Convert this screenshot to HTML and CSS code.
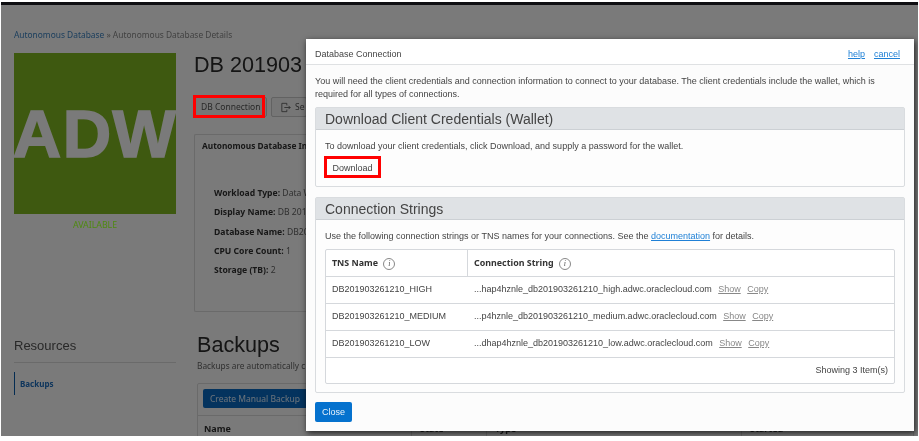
FILE: index.html
```html
<!DOCTYPE html>
<html lang="en">
<head>
<meta charset="utf-8">
<title>Database Connection</title>
<link rel="stylesheet" href="styles.css">
</head>
<body>
<div class="screen">
  <div class="topbar"></div>
  <main class="page">
    <nav class="crumbs"><a href="#">Autonomous Database</a> » Autonomous Database Details</nav>
    <div class="detail">
      <aside class="side">
        <div class="tile"><span class="tile-text">ADW</span></div>
        <div class="status">AVAILABLE</div>
      </aside>
      <section class="summary">
        <h1 class="title">DB 201903</h1>
        <div class="actions">
          <button class="btn btn-db">DB Connection<span class="mark mark-db"></span></button>
          <button class="btn btn-icon">
            <svg class="scale-icon" viewBox="0 0 12 12" width="10" height="11"><path d="M7 3.5V1H1v10h6V8.5M4 6h7M9 4l2 2-2 2" fill="none" stroke="currentColor"/></svg>
            <span>Se</span>
          </button>
        </div>
        <div class="info">
          <h2 class="info-title">Autonomous Database In</h2>
          <dl class="facts">
            <div><dt>Workload Type:</dt> <dd>Data W</dd></div>
            <div><dt>Display Name:</dt> <dd>DB 201</dd></div>
            <div><dt>Database Name:</dt> <dd>DB20</dd></div>
            <div><dt>CPU Core Count:</dt> <dd>1</dd></div>
            <div><dt>Storage (TB):</dt> <dd>2</dd></div>
          </dl>
        </div>
      </section>
      <aside class="resources">
        <h3 class="res-title">Resources</h3>
        <a class="res-link" href="#">Backups</a>
      </aside>
      <section class="backups">
        <h2 class="backups-title">Backups</h2>
        <p class="backups-note">Backups are automatically c</p>
        <div class="backups-table">
          <div class="backups-bar"><button class="btn-primary">Create Manual Backup</button></div>
          <div class="backups-head"><span>Name</span><span>State</span><span>Type</span><span>Started</span></div>
        </div>
      </section>
    </div>
  </main>

  <div class="overlay"></div>

  <div class="modal">
    <header class="modal-head">
      <span>Database Connection</span>
      <span class="modal-links"><a href="#">help</a><a href="#">cancel</a></span>
    </header>
    <div class="modal-body">
      <p class="intro">You will need the client credentials and connection information to connect to your database. The client credentials include the wallet, which is required for all types of connections.</p>
      <section class="panel panel-wallet">
        <h2 class="panel-head">Download Client Credentials (Wallet)</h2>
        <div class="panel-body">
          <p class="panel-text">To download your client credentials, click Download, and supply a password for the wallet.</p>
          <button class="btn-plain">Download<span class="mark mark-dl"></span></button>
        </div>
      </section>
      <section class="panel">
        <h2 class="panel-head">Connection Strings</h2>
        <div class="panel-body">
          <p class="panel-text">Use the following connection strings or TNS names for your connections. See the <a href="#">documentation</a> for details.</p>
          <div class="conn">
            <div class="row row-head">
              <div class="cell cell-name">TNS Name <span class="info-i">i</span></div>
              <div class="cell cell-str">Connection String <span class="info-i">i</span></div>
            </div>
            <div class="row">
              <div class="cell cell-name">DB201903261210_HIGH</div>
              <div class="cell cell-str">...hap4hznle_db201903261210_high.adwc.oraclecloud.com <a href="#">Show</a> <a href="#">Copy</a></div>
            </div>
            <div class="row">
              <div class="cell cell-name">DB201903261210_MEDIUM</div>
              <div class="cell cell-str">...p4hznle_db201903261210_medium.adwc.oraclecloud.com <a href="#">Show</a> <a href="#">Copy</a></div>
            </div>
            <div class="row">
              <div class="cell cell-name">DB201903261210_LOW</div>
              <div class="cell cell-str">...dhap4hznle_db201903261210_low.adwc.oraclecloud.com <a href="#">Show</a> <a href="#">Copy</a></div>
            </div>
            <div class="conn-foot">Showing 3 Item(s)</div>
          </div>
        </div>
      </section>
      <button class="btn-close">Close</button>
    </div>
  </div>
</div>
</body>
</html>
```

FILE: styles.css
```css
* { box-sizing: border-box; }
html, body { margin: 0; padding: 0; background: #fff; }
body { font-family: "Liberation Sans", Arial, sans-serif; overflow: hidden; }
p, h1, h2, h3, dl, dd { margin: 0; }
a { text-decoration: none; }

.screen {
  position: relative;
  width: 917px;
  height: 434px;
  margin: 2px 0 0 1px;
  overflow: hidden;
  background: #fff;
  filter: blur(.3px);
}
.topbar { height: 3px; background: #1f1f24; }

.page { padding: 0 0 0 13px; color: #333; }
.crumbs { padding-top: 23px; height: 48px; font: 8.4px/14px "Noto Sans", sans-serif; color: #8a8a8a; }
.crumbs a { color: #3e85c4; }

.detail { display: grid; grid-template-columns: 162px 720px; column-gap: 18px; }
.tile {
  width: 162px; height: 161px; background: #82bb22;
  display: flex; align-items: center; justify-content: center; overflow: hidden;
}
.tile-text {
  flex: none; font: 700 67px/1 "Liberation Sans", sans-serif; color: #fff;
  -webkit-text-stroke: 1.6px #fff; letter-spacing: 1.5px; padding-bottom: 1px;
}
.status { position: relative; z-index: 2; margin-top: 5px; text-align: center; font: 8.8px/12px "Noto Sans", sans-serif; color: #4f8a10; }

.summary { width: 113px; }
.title { white-space: nowrap; font: 400 21.6px/24px "Liberation Sans", sans-serif; color: #2c2c2c; }
.actions { display: flex; gap: 4px; margin-top: 20px; }
.btn {
  position: relative; flex: none; height: 20px; padding: 0 6px; border: 1px solid #ccc; border-radius: 2px; background: #f7f7f7;
  font: 8.5px/18px "Noto Sans", sans-serif; color: #555; white-space: nowrap; text-align: left;
}
.btn-db { width: 73px; }
.btn-icon { display: flex; align-items: center; gap: 4px; width: 36px; padding: 0 0 0 9px; }
.scale-icon { flex: none; }
.mark { position: absolute; z-index: 2; border: 3px solid #f00; pointer-events: none; }
.mark-db { left: -2px; top: -3px; width: 72px; height: 23px; }
.mark-dl { left: 0; top: 0; width: 57px; height: 22px; }

.info { margin-top: 17px; width: 113px; height: 178px; border: 1px solid #ddd; border-right: 0; border-radius: 2px 0 0 2px; padding: 4px 0 0 7px; white-space: nowrap; }
.info-title { font: 700 8.3px/14px "Noto Sans", sans-serif; color: #333; }
.facts { margin: 33px 0 0 12px; }
.facts div { height: 19.3px; font: 8.6px/14px "Noto Sans", sans-serif; color: #666; }
.facts dt { display: inline; font-weight: 700; color: #333; }
.facts dd { display: inline; }

.resources { margin-top: 23px; }
.res-title { font: 400 13px/21px "Liberation Sans", sans-serif; color: #555; padding-bottom: 6px; border-bottom: 1px solid #ddd; }
.res-link { display: block; margin-top: 9px; height: 23px; border-left: 1px solid #0a5cab; padding-left: 5px; font: 700 8px/23px "Noto Sans", sans-serif; color: #1e6fc0; }

.backups { margin-top: 21px; padding-left: 3px; }
.backups-title { font: 400 21.6px/24px "Liberation Sans", sans-serif; color: #2c2c2c; }
.backups-note { margin-top: 3px; height: 12px; white-space: nowrap; font: 8.3px/12px "Noto Sans", sans-serif; color: #666; }
.backups-table { margin-top: 11px; border: 1px solid #ddd; border-radius: 2px; }
.backups-bar { padding: 5px 5px; height: 32px; border-bottom: 1px solid #ddd; }
.btn-primary { display: block; height: 19px; width: 106px; padding: 0 0 0 7px; text-align: left; border: 0; border-radius: 2px; background: #0a6cc4; color: #ddeeff; font: 8.5px/19px "Noto Sans", sans-serif; white-space: nowrap; }
.backups-head { display: grid; grid-template-columns: 213px 75px 255px 1fr; font: 700 9px/12px "Noto Sans", sans-serif; color: #333; }
.backups-head span { padding: 7px 6px; }
.backups-head span + span { border-left: 1px solid #ddd; padding-left: 8px; }

.overlay { position: absolute; inset: 0; z-index: 1; background: rgba(0,0,0,.52); }

.modal {
  position: absolute; z-index: 3; left: 305px; top: 37px; width: 608px; height: 392px;
  background: #fcfcfc; box-shadow: 1px 2px 6px rgba(0,0,0,.75);
  color: #444; font: 9px/13px "Liberation Sans", sans-serif;
}
.modal-head {
  height: 26px; padding: 5px 14px 0 9px; background: #fff; border-bottom: 1px solid #dfe1e3;
  display: flex; justify-content: space-between; align-items: center;
}
.modal-links { display: flex; gap: 9px; }
.modal a { color: #1f80d6; text-decoration: underline; }
.modal-body { padding: 10px 9px 0; }
.intro { height: 32px; line-height: 13px; }
.panel { border: 1px solid #d9dcdf; border-radius: 2px; margin-bottom: 9px; background: #fdfdfd; }
.panel-wallet { margin-bottom: 10px; }
.panel-head { height: 22px; padding: 0 9px; background: #dfe2e5; border-bottom: 1px solid #ccd0d4; font: 400 14px/22px "Liberation Sans", sans-serif; color: #444; }
.panel-body { padding: 10px 9px 8px; }
.panel-text { line-height: 13px; }
.panel-wallet .panel-body { height: 56px; padding-bottom: 0; }
.btn-plain { position: relative; display: block; width: 57px; height: 22px; padding: 2px 0 0; margin: 3px 0 0 -1px; border: 0; background: none; font: 9px/20px "Liberation Sans", sans-serif; color: #444; }
.conn { margin-top: 6px; border: 1px solid #d5d8dc; border-radius: 2px; background: #fff; }
.row { display: grid; grid-template-columns: 142px 1fr; height: 27px; border-bottom: 1px solid #d5d8dc; }
.cell { padding: 0 6px; line-height: 25px; white-space: nowrap; }
.row .cell a { color: #888; margin-left: 4px; }
.row-head .cell { font-weight: 700; font-family: "Noto Sans", sans-serif; font-size: 8.9px; color: #333; }
.row-head .cell-name { border-right: 1px solid #d5d8dc; }
.info-i {
  display: inline-block; width: 12px; height: 12px; margin-left: 3px; border: 1px solid #888; border-radius: 50%;
  font: italic 400 8px/10px "Liberation Serif", serif; text-align: center; vertical-align: middle; color: #555;
}
.conn-foot { height: 25px; padding-right: 6px; text-align: right; line-height: 25px; }
.btn-close { display: block; width: 37px; height: 20px; padding: 0; border: 0; border-radius: 2px; background: #0572ce; color: #e8f2fb; font: 9px/20px "Liberation Sans", sans-serif; }
```
